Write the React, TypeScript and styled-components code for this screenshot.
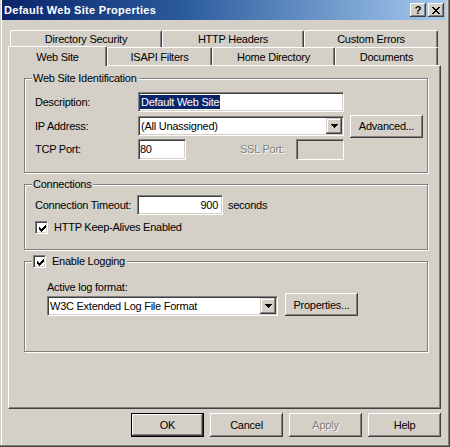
import React from 'react';
import styled, { createGlobalStyle, css } from 'styled-components';

const FACE = '#D4D0C8';
const SHADOW = '#808080';
const DARK = '#404040';
const HILITE = '#FFFFFF';
const SELECT = '#0A246A';

const GlobalStyle = createGlobalStyle`
  html, body { margin: 0; padding: 0; background: ${FACE}; }
  body {
    font-family: "Liberation Sans", Arial, sans-serif;
    font-size: 11px;
    color: #000;
  }
  * { box-sizing: border-box; }
`;

const Window = styled.div`
  width: 450px;
  height: 447px;
  overflow: hidden;
  background: ${FACE};
  display: flex;
  flex-direction: column;
  padding: 0 4px 4px 2px;
  letter-spacing: -0.25px;
  box-shadow: inset -1px -1px 0 ${DARK}, inset -2px -2px 0 ${SHADOW},
    inset 1px 0 0 ${FACE}, inset 2px 0 0 ${HILITE};
`;

const TitleBar = styled.div`
  height: 20px;
  flex: none;
  display: flex;
  align-items: center;
  justify-content: space-between;
  padding: 0 2px 0 2px;
  background: linear-gradient(to right, ${SELECT} 0%, #2a5a9c 40%, #A6CAF0 100%);
`;

const TitleText = styled.span`
  color: #fff;
  font-weight: bold;
  font-size: 11px;
  letter-spacing: 0.3px;
  white-space: nowrap;
`;

const CaptionButtons = styled.div`
  display: flex;
  gap: 2px;
`;

const CaptionButton = styled.div`
  width: 16px;
  height: 14px;
  background: ${FACE};
  display: flex;
  align-items: center;
  justify-content: center;
  font-weight: bold;
  font-size: 11px;
  letter-spacing: 0;
  box-shadow: inset -1px -1px 0 ${DARK}, inset 1px 1px 0 ${HILITE},
    inset -2px -2px 0 ${SHADOW};
`;

const Main = styled.div`
  flex: 1;
  display: flex;
  flex-direction: column;
  padding: 10px 5px 0 6px;
`;

const TabRow = styled.div<{ $h: number; $indent: number }>`
  display: flex;
  height: ${(p) => p.$h}px;
  padding: 0 3px 0 ${(p) => p.$indent}px;
  align-items: flex-end;
`;

const Tab = styled.div<{ $w: number; $active?: boolean }>`
  width: ${(p) => p.$w}px;
  height: 100%;
  flex: none;
  display: flex;
  align-items: center;
  justify-content: center;
  white-space: nowrap;
  background: ${FACE};
  border-top: 1px solid ${HILITE};
  border-left: 1px solid ${HILITE};
  border-right: 1px solid ${DARK};
  border-top-left-radius: 2px;
  border-top-right-radius: 2px;
  box-shadow: inset -1px 0 0 ${SHADOW};
  ${(p) =>
    p.$active &&
    css`
      height: calc(100% + 2px);
      margin-bottom: -1px;
      position: relative;
      z-index: 1;
    `}
`;

const Panel = styled.div`
  height: 344px;
  flex: none;
  border-top: 1px solid ${HILITE};
  border-left: 1px solid ${HILITE};
  border-right: 1px solid ${DARK};
  border-bottom: 1px solid ${DARK};
  box-shadow: inset -1px -1px 0 ${SHADOW};
  padding: 12px 12px 0 15px;
  display: flex;
  flex-direction: column;
  gap: 11px;
`;

const Group = styled.div<{ $pad: string }>`
  border: 1px solid ${SHADOW};
  box-shadow: inset 1px 1px 0 ${HILITE}, 1px 1px 0 ${HILITE};
  display: flex;
  flex-direction: column;
  padding: ${(p) => p.$pad};
`;

const Legend = styled.div`
  align-self: flex-start;
  display: flex;
  align-items: center;
  gap: 6px;
  height: 13px;
  line-height: 13px;
  margin: -7px 0 -6px -3px;
  padding: 0 2px 0 1px;
  background: ${FACE};
  white-space: nowrap;
`;

const GroupBody = styled.div<{ $top: number; $gap: number; $indent?: number }>`
  display: flex;
  flex-direction: column;
  gap: ${(p) => p.$gap}px;
  margin-top: ${(p) => p.$top}px;
  padding-left: ${(p) => p.$indent ?? 0}px;
`;

const Row = styled.div<{ $h: number; $align?: string; $mt?: number }>`
  display: flex;
  align-items: ${(p) => p.$align ?? 'center'};
  height: ${(p) => p.$h}px;
  margin-top: ${(p) => p.$mt ?? 0}px;
`;

const Label = styled.span<{ $w?: number; $ml?: number; $disabled?: boolean }>`
  width: ${(p) => (p.$w ? `${p.$w}px` : 'auto')};
  margin-left: ${(p) => p.$ml ?? 0}px;
  flex: none;
  line-height: 13px;
  white-space: nowrap;
  color: ${(p) => (p.$disabled ? SHADOW : '#000')};
  text-shadow: ${(p) => (p.$disabled ? `1px 1px 0 ${HILITE}` : 'none')};
`;

const Field = styled.div<{ $w: number; $h: number; $disabled?: boolean; $right?: boolean }>`
  width: ${(p) => p.$w}px;
  height: ${(p) => p.$h}px;
  flex: none;
  background: ${(p) => (p.$disabled ? FACE : '#fff')};
  border: 1px solid;
  border-color: ${SHADOW} ${HILITE} ${HILITE} ${SHADOW};
  box-shadow: inset 1px 1px 0 ${DARK}, inset -1px -1px 0 ${FACE};
  display: flex;
  align-items: center;
  justify-content: ${(p) => (p.$right ? 'flex-end' : 'flex-start')};
  padding: ${(p) => (p.$right ? '0 4px 0 2px' : '0 2px 0 1px')};
  white-space: nowrap;
  line-height: 13px;
`;

const Combo = styled(Field)`
  padding: 1px 1px 1px 2px;
  justify-content: space-between;
`;

const Selected = styled.span`
  background: ${SELECT};
  color: #fff;
  padding: 0 1px;
  line-height: 14px;
`;

const DropButton = styled.div`
  width: 16px;
  height: 16px;
  flex: none;
  background: ${FACE};
  display: flex;
  align-items: center;
  justify-content: center;
  box-shadow: inset -1px -1px 0 ${DARK}, inset 1px 1px 0 ${FACE},
    inset -2px -2px 0 ${SHADOW}, inset 2px 2px 0 ${HILITE};
`;

const PushButton = styled.button<{ $w: number; $h: number; $ml?: number; $default?: boolean }>`
  width: ${(p) => p.$w}px;
  height: ${(p) => p.$h}px;
  margin-left: ${(p) => p.$ml ?? 0}px;
  flex: none;
  font: inherit;
  letter-spacing: inherit;
  color: #000;
  background: ${FACE};
  padding: 0;
  border: none;
  outline: none;
  box-shadow: inset -1px -1px 0 ${DARK}, inset 1px 1px 0 ${HILITE},
    inset -2px -2px 0 ${SHADOW};
  ${(p) =>
    p.$default &&
    css`
      border: 1px solid #000;
    `}
  &:disabled {
    color: ${SHADOW};
    text-shadow: 1px 1px 0 ${HILITE};
  }
`;

const CheckRow = styled.div`
  display: flex;
  align-items: center;
  gap: 6px;
  height: 13px;
  line-height: 13px;
  white-space: nowrap;
`;

const CheckBox = styled.div`
  width: 13px;
  height: 13px;
  flex: none;
  background: #fff;
  border: 1px solid;
  border-color: ${SHADOW} ${HILITE} ${HILITE} ${SHADOW};
  box-shadow: inset 1px 1px 0 ${DARK}, inset -1px -1px 0 ${FACE};
  display: flex;
  align-items: center;
  justify-content: center;
  padding: 1px 0 0 1px;
`;

const ButtonBar = styled.div`
  display: flex;
  justify-content: flex-end;
  gap: 6px;
  margin-top: 4px;
`;

const Check = () => (
  <svg width="7" height="7" viewBox="0 0 7 7" shapeRendering="crispEdges">
    <path
      d="M6 0h1v1h-1z M5 1h2v1h-2z M0 2h1v1h-1z M4 2h3v1h-3z M0 3h2v1h-2z M3 3h3v1h-3z M0 4h5v1h-5z M1 5h3v1h-3z M2 6h1v1h-1z"
      fill="#000"
    />
  </svg>
);

const DownArrow = () => (
  <svg width="7" height="4" viewBox="0 0 7 4" shapeRendering="crispEdges">
    <path d="M0 0h7v1h-7z M1 1h5v1h-5z M2 2h3v1h-3z M3 3h1v1h-1z" fill="#000" />
  </svg>
);

const CloseGlyph = () => (
  <svg width="8" height="7" viewBox="0 0 8 7" shapeRendering="crispEdges">
    <path
      d="M0 0h2v1h-2z M6 0h2v1h-2z M1 1h2v1h-2z M5 1h2v1h-2z M2 2h4v1h-4z M3 3h2v1h-2z M2 4h4v1h-4z M1 5h2v1h-2z M5 5h2v1h-2z M0 6h2v1h-2z M6 6h2v1h-2z"
      fill="#000"
    />
  </svg>
);

export default function App() {
  return (
    <>
      <GlobalStyle />
      <Window>
        <TitleBar>
          <TitleText>Default Web Site Properties</TitleText>
          <CaptionButtons>
            <CaptionButton>?</CaptionButton>
            <CaptionButton>
              <CloseGlyph />
            </CaptionButton>
          </CaptionButtons>
        </TitleBar>
        <Main>
          <TabRow $h={17} $indent={2}>
            <Tab $w={152}>Directory Security</Tab>
            <Tab $w={142}>HTTP Headers</Tab>
            <Tab $w={134}>Custom Errors</Tab>
          </TabRow>
          <TabRow $h={18} $indent={0}>
            <Tab $w={99} $active>
              Web Site
            </Tab>
            <Tab $w={105}>ISAPI Filters</Tab>
            <Tab $w={123}>Home Directory</Tab>
            <Tab $w={103}>Documents</Tab>
          </TabRow>
          <Panel>
            <Group $pad="0 0 12px 10px">
              <Legend>Web Site Identification</Legend>
              <GroupBody $top={13} $gap={4}>
                <Row $h={20}>
                  <Label $w={103}>Description:</Label>
                  <Field $w={206} $h={20}>
                    <Selected>Default Web Site</Selected>
                  </Field>
                </Row>
                <Row $h={20}>
                  <Label $w={103}>IP Address:</Label>
                  <Combo $w={206} $h={20}>
                    <span>(All Unassigned)</span>
                    <DropButton>
                      <DownArrow />
                    </DropButton>
                  </Combo>
                  <PushButton $w={73} $h={23} $ml={6}>
                    Advanced...
                  </PushButton>
                </Row>
                <Row $h={21} $mt={-1}>
                  <Label $w={103}>TCP Port:</Label>
                  <Field $w={48} $h={21}>
                    80
                  </Field>
                  <Label $w={56} $ml={54} $disabled>
                    SSL Port:
                  </Label>
                  <Field $w={48} $h={21} $disabled />
                </Row>
              </GroupBody>
            </Group>

            <Group $pad="0 0 15px 10px">
              <Legend>Connections</Legend>
              <GroupBody $top={10} $gap={6}>
                <Row $h={20}>
                  <Label $w={102}>Connection Timeout:</Label>
                  <Field $w={86} $h={20} $right>
                    900
                  </Field>
                  <Label $ml={5}>seconds</Label>
                </Row>
                <CheckRow>
                  <CheckBox>
                    <Check />
                  </CheckBox>
                  HTTP Keep-Alives Enabled
                </CheckRow>
              </GroupBody>
            </Group>

            <Group $pad="0 0 35px 10px">
              <Legend>
                <CheckRow>
                  <CheckBox>
                    <Check />
                  </CheckBox>
                  Enable Logging
                </CheckRow>
              </Legend>
              <GroupBody $top={19} $gap={2} $indent={12}>
                <Label>Active log format:</Label>
                <Row $h={20} $align="flex-end">
                  <Combo $w={231} $h={20}>
                    <span>W3C Extended Log File Format</span>
                    <DropButton>
                      <DownArrow />
                    </DropButton>
                  </Combo>
                  <PushButton $w={73} $h={23} $ml={7}>
                    Properties...
                  </PushButton>
                </Row>
              </GroupBody>
            </Group>
          </Panel>
          <ButtonBar>
            <PushButton $w={73} $h={24} $default>
              OK
            </PushButton>
            <PushButton $w={73} $h={24}>
              Cancel
            </PushButton>
            <PushButton $w={73} $h={24} disabled>
              Apply
            </PushButton>
            <PushButton $w={73} $h={24}>
              Help
            </PushButton>
          </ButtonBar>
        </Main>
      </Window>
    </>
  );
}
